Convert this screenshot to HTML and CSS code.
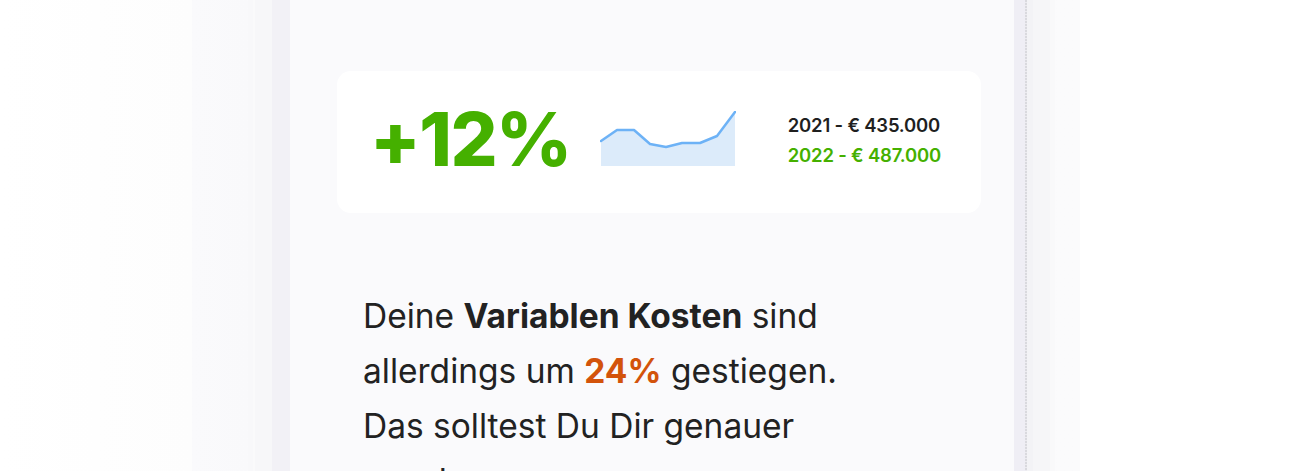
FILE: index.html
```html
<!DOCTYPE html>
<html lang="de">
<head>
  <meta charset="UTF-8">
  <title>Auswertung</title>
  <meta name="viewport" content="width=device-width, initial-scale=1.0">
  <link rel="stylesheet" href="styles.css">
</head>
<body>

  <div class="stage">
    <div class="halo">
      <div class="rim">
        <div class="bezel">
          <div class="screen">

            <div class="stat-card">
              <div class="stat-value">+12%</div>
              <svg class="spark" width="136" height="56" viewBox="0 0 136 56">
                <path d="M1 30 L17 19 L34 19 L50 33 L66 36 L82 32 L100 32 L117 25 L135 1 L135 55 L1 55 Z" fill="#dcebfa"/>
                <polyline points="1,30 17,19 34,19 50,33 66,36 82,32 100,32 117,25 135,1" fill="none" stroke="#6db2f6" stroke-width="2.5" stroke-linejoin="round" stroke-linecap="round"/>
              </svg>
              <div class="stat-years">
                <div class="year-old">2021 - € 435.000</div>
                <div class="year-new">2022 - € 487.000</div>
              </div>
            </div>

            <p class="note">
              Deine <b>Variablen Kosten</b> sind allerdings um <b class="up">24%</b> gestiegen.
              Das solltest Du Dir genauer ansehen.
            </p>

          </div>
        </div>
      </div>
    </div>
  </div>

</body>
</html>
```

FILE: styles.css
```css
html, body {
  margin: 0;
  height: 471px;
  overflow: hidden;
  background: #fff;
}
body {
  font-family: Inter, "Noto Sans", sans-serif;
  color: #222;
}
.stage {
  display: flex;
  height: 471px;
  padding-left: 192px;
  background: linear-gradient(90deg, #fff 0, #fdfdfd 192px, #fff 192px);
}
.halo {
  display: flex;
  background: linear-gradient(90deg, #fafafc 0, #f9f9fb 56px, #fbfbfc 100%);
  padding: 0 25px 0 56px;
}
.rim {
  display: flex;
  background:
    linear-gradient(270deg, #f9f9fa 0, #f9f9fa 5px, #f6f6f8 5px, #f6f6f8 22px, #f3f3f6 22px, #f3f3f6 28px, transparent 28px),
    linear-gradient(90deg, #f8f8fa 0, #f8f8fa 5px, #fafafb 5px, #fafafb 7px, #f7f7f9 7px);
  padding: 0 30px 0 24px;
}
.bezel {
  display: flex;
  background: #f2f1f6;
  padding-left: 18px;
  border-right: 11px solid #efeef5;
  position: relative;
}
.bezel::after {
  content: "";
  position: absolute;
  top: 0;
  bottom: 0;
  right: -13px;
  width: 2px;
  background: repeating-linear-gradient(180deg, #d9d9de 0, #d9d9de 2px, #ecebf0 2px, #ecebf0 3px);
}
.screen {
  width: 724px;
  background: #fafafc;
  padding: 71px 33px 0 47px;
  box-sizing: border-box;
}
.stat-card {
  display: flex;
  align-items: center;
  width: 644px;
  height: 142px;
  box-sizing: border-box;
  background: #fff;
  border-radius: 14px;
  padding: 0 0 0 33px;
}
.stat-value {
  font-size: 74px;
  font-weight: 800;
  color: #45b000;
  letter-spacing: -1.5px;
  line-height: 1;
  margin-top: -6px;
}
.spark {
  margin-left: 29px;
  margin-top: -6px;
}
.stat-years {
  margin-left: 52px;
  font-size: 18.5px;
  font-weight: 600;
  line-height: 30px;
  letter-spacing: -0.2px;
  margin-top: -5px;
}
.year-old {
  color: #1f1f1f;
}
.year-new {
  color: #45b000;
}
.note {
  margin: 76px 0 0 26px;
  width: 500px;
  font-size: 33.5px;
  line-height: 55px;
  color: #222;
}
.note b {
  font-weight: 700;
}
.note .up {
  color: #d3530b;
}
```
